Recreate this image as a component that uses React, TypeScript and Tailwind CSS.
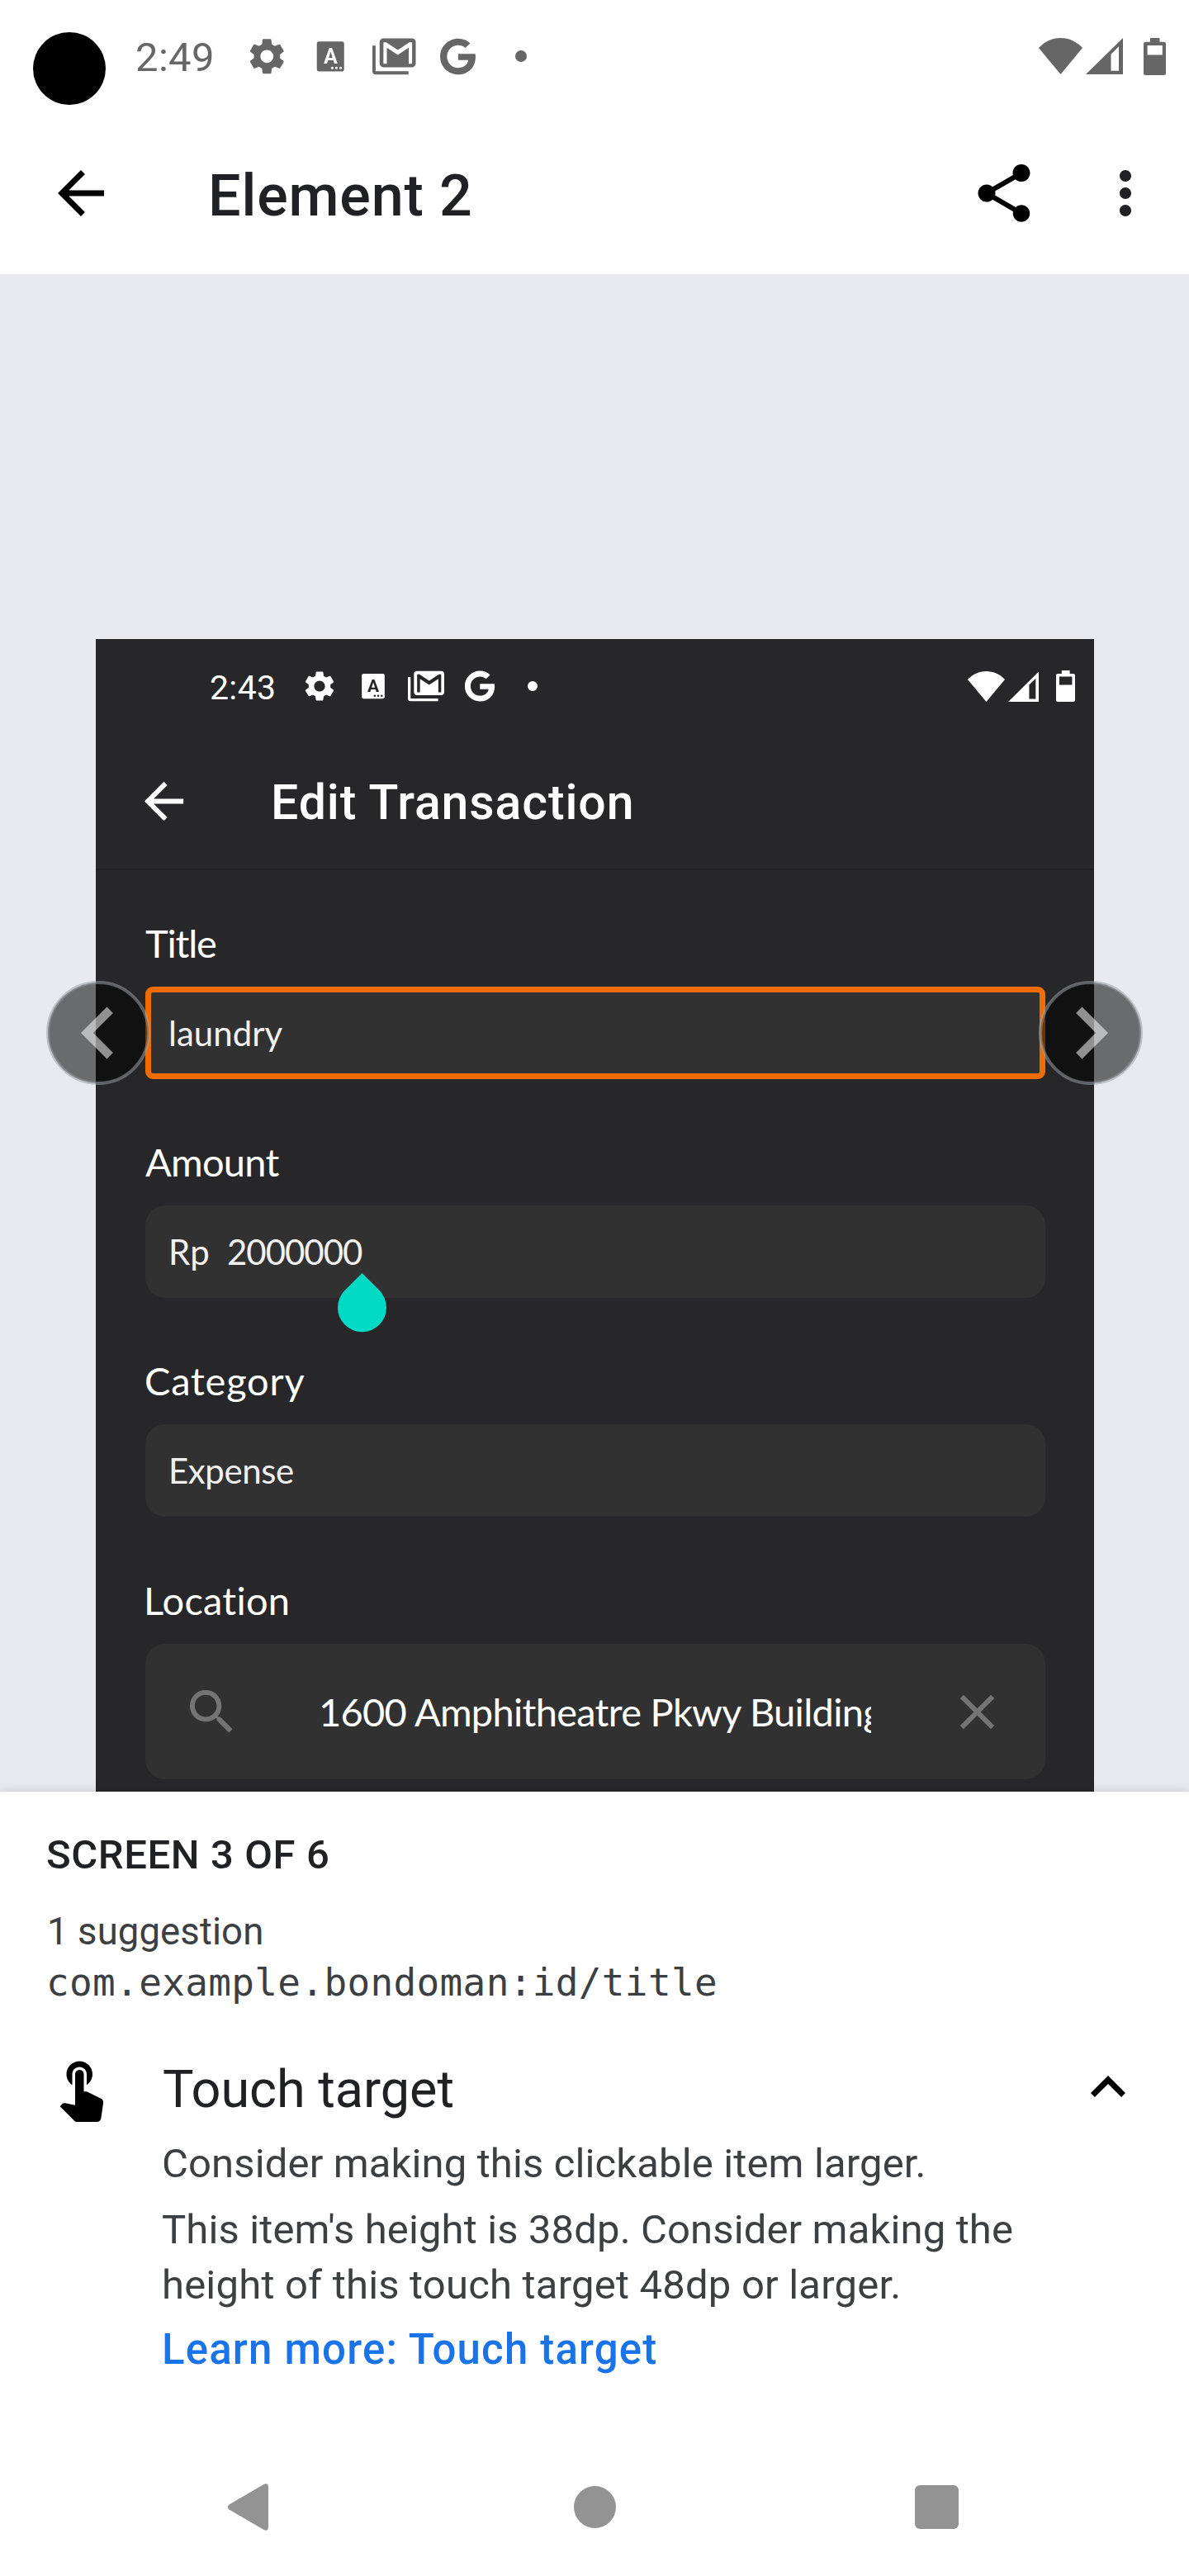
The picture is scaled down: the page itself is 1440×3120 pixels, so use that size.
import React from "react";
import {
  MdArrowBack,
  MdClose,
  MdExpandLess,
  MdMoreVert,
  MdSearch,
  MdSettings,
  MdShare,
} from "react-icons/md";
import { FaGoogle } from "react-icons/fa";

type IconProps = { className?: string };

function KeyboardIcon({ className }: IconProps) {
  return (
    <svg viewBox="0 0 24 24" className={className} fill="currentColor">
      <mask id="keyboard-cut">
        <rect width="24" height="24" fill="#fff" />
        <text
          x="12.05"
          y="16"
          textAnchor="middle"
          fontSize="11.5"
          fontWeight="700"
          fontFamily="Roboto, sans-serif"
          fill="#000"
        >
          A
        </text>
        <circle cx="13" cy="18.4" r="0.7" fill="#000" />
        <circle cx="15.3" cy="18.4" r="0.7" fill="#000" />
        <circle cx="17.6" cy="18.4" r="0.7" fill="#000" />
      </mask>
      <rect x="4.45" y="3.8" width="15.1" height="16.5" rx="1.1" mask="url(#keyboard-cut)" />
    </svg>
  );
}

function MailStackIcon({ className }: IconProps) {
  return (
    <svg viewBox="0 0 24 24" className={className} fill="currentColor">
      <path d="M0 6h1.8v14.2H20V22H1.800A1.800 1.800 0 0 1 0 20.200Z" />
      <path
        fillRule="evenodd"
        d="M6 2H22a2 2 0 0 1 2 2V16a2 2 0 0 1-2 2H6a2 2 0 0 1-2-2V4a2 2 0 0 1 2-2ZM6.100 16.100V4.200H7.600L14.050 8.400 20.500 4.200H22V16.100H20.100V7.200L14.050 11.200 8 7.200V16.100Z"
      />
    </svg>
  );
}

function WifiIcon({ className }: IconProps) {
  return (
    <svg viewBox="0 0 53 44" preserveAspectRatio="none" className={className} fill="currentColor">
      <path d="M26.500 44L0 12C7 4.500 16 0 26.500 0S46 4.500 53 12Z" />
    </svg>
  );
}

function SignalIcon({ className }: IconProps) {
  return (
    <svg viewBox="0 0 45 44" preserveAspectRatio="none" className={className} fill="currentColor">
      <path fillRule="evenodd" d="M0 44L45 0V44ZM30.500 19.700V39.700H40V10.300Z" />
    </svg>
  );
}

function BatteryIcon({ className }: IconProps) {
  return (
    <svg viewBox="0 0 27 45" preserveAspectRatio="none" className={className} fill="currentColor">
      <path
        fillRule="evenodd"
        d="M8 0H19.500V4.700H24.500A2.500 2.500 0 0 1 27 7.200V42.500A2.500 2.500 0 0 1 24.500 45H2.500A2.500 2.500 0 0 1 0 42.500V7.200A2.500 2.500 0 0 1 2.500 4.700H8ZM4.600 9V20.600H22.800V9Z"
      />
    </svg>
  );
}

function TouchIcon({ className }: IconProps) {
  return (
    <svg viewBox="0 0 24 24" className={className} fill="currentColor">
      <path d="M9 11.240V7.500C9 6.120 10.120 5 11.500 5S14 6.120 14 7.500v3.740c1.210-.81 2-2.180 2-3.740C16 5.010 13.990 3 11.500 3S7 5.010 7 7.500c0 1.560.79 2.930 2 3.740zm9.840 4.630l-4.540-2.260c-.17-.07-.35-.11-.54-.11H13v-6c0-.83-.67-1.500-1.500-1.500S10 6.670 10 7.500v10.740l-3.430-.72c-.08-.01-.15-.03-.24-.03-.31 0-.59.13-.79.33l-.79.8 4.940 4.940c.27.27.65.44 1.060.44h6.790c.75 0 1.330-.55 1.440-1.280l.75-5.270c.01-.07.02-.14.02-.2 0-.62-.38-1.160-.91-1.380z" />
    </svg>
  );
}

function PagerButton({ direction, className }: { direction: "left" | "right"; className: string }) {
  return (
    <button aria-label={direction === "left" ? "Previous" : "Next"} className={className}>
      <svg viewBox="0 0 126 126" className="size-[126px]">
        <circle cx="63" cy="63" r="61" fill="#000" fillOpacity="0.54" />
        <circle
          cx="63"
          cy="63"
          r="61"
          fill="none"
          stroke="#9aa0a6"
          strokeOpacity="0.54"
          strokeWidth="4"
        />
        <path
          transform="scale(5.25)"
          fill="#fff"
          fillOpacity="0.54"
          d={
            direction === "left"
              ? "M15.410 7.410L14 6l-6 6 6 6 1.410-1.410L10.830 12z"
              : "M8.590 16.590L10 18l6-6-6-6-1.410 1.410L13.170 12z"
          }
        />
      </svg>
    </button>
  );
}

function PhoneStatusBar() {
  return (
    <div className="flex h-[136px] items-center pr-7 text-[#666666]">
      <div className="mt-[30px] ml-10 size-[88px] rounded-full bg-black" />
      <span className="ml-9 w-[133px] pt-1 text-[49px] leading-[60px] tracking-[0.35px]">2:49</span>
      <div className="flex items-center gap-[24.5px]">
        <MdSettings className="size-[52.5px]" />
        <KeyboardIcon className="size-[52.5px]" />
        <MailStackIcon className="size-[52.5px]" />
        <div className="flex w-[52.5px] justify-center">
          <FaGoogle className="size-[45px]" />
        </div>
        <div className="flex w-[52.5px] justify-center">
          <div className="size-3.5 rounded-full bg-current" />
        </div>
      </div>
      <div className="ml-auto flex items-center">
        <WifiIcon className="h-11 w-[53px]" />
        <SignalIcon className="ml-[4.5px] h-11 w-[45px]" />
        <BatteryIcon className="ml-[25px] h-[45px] w-[27px]" />
      </div>
    </div>
  );
}

function AppBar() {
  return (
    <header className="flex h-[196px] items-center pr-[35px] pl-14">
      <MdArrowBack className="size-[84px] text-black" />
      <h1 className="ml-28 pt-[6px] text-[70px] leading-[84px] font-medium tracking-[0.87px] text-[#202124]">
        Element 2
      </h1>
      <MdShare className="ml-auto size-[84px] text-black" />
      <MdMoreVert className="ml-[63px] size-[84px] text-[#202124]" />
    </header>
  );
}

function PreviewHeader() {
  return (
    <>
      <div className="flex h-[114px] items-center pr-[23px] text-white">
        <span className="ml-[138px] w-[111px] pt-1 text-[41px] leading-[50px] tracking-[0.33px]">
          2:43
        </span>
        <div className="flex items-center gap-[20.6px]">
          <MdSettings className="size-11" />
          <KeyboardIcon className="size-11" />
          <MailStackIcon className="size-11" />
          <div className="flex w-11 justify-center">
            <FaGoogle className="size-[38px]" />
          </div>
          <div className="flex w-11 justify-center">
            <div className="size-3 rounded-full bg-current" />
          </div>
        </div>
        <div className="ml-auto flex items-center">
          <WifiIcon className="h-[37px] w-[45px]" />
          <SignalIcon className="ml-[3.5px] h-[37px] w-[37.5px]" />
          <BatteryIcon className="ml-[21px] h-[38px] w-[23px]" />
        </div>
      </div>
      <div className="flex h-[166px] items-center border-b-2 border-[#212123] pl-[47px] text-white">
        <MdArrowBack className="size-[71px]" />
        <h2 className="ml-[94px] pt-1 text-[59px] leading-[72px] font-medium tracking-[0.88px]">
          Edit Transaction
        </h2>
      </div>
    </>
  );
}

function PreviewForm() {
  return (
    <div className="flex flex-col gap-[68px] pt-14 pr-[59px] pl-[60px] font-[Lato,sans-serif] text-[42px] text-[#f1f1f1]">
      <div className="flex flex-col gap-[21px]">
        <label className="text-[47px] leading-[64px] tracking-[-1.2px] text-white">Title</label>
        <div className="flex h-28 items-center rounded-[9px] border-[7px] border-[#ef6c00] bg-[#313131] pl-[21px] leading-[56px]">
          laundry
        </div>
      </div>
      <div className="flex flex-col gap-[21px]">
        <label className="text-[47px] leading-[64px] tracking-[-0.75px] text-white">Amount</label>
        <div className="relative flex h-28 items-center rounded-3xl bg-[#313131] pl-7 leading-[56px]">
          <span className="w-[71px] tracking-[0.2px]">Rp</span>
          <span className="tracking-[-1.03px]">2000000</span>
          <svg viewBox="0 0 60 72" className="absolute top-[82px] left-[233px] h-[72px] w-[60px]">
            <path
              fill="#03dac5"
              d="M29.500 0L50.360 20.860A29.500 29.500 0 1 1 8.640 20.860Z"
            />
          </svg>
        </div>
      </div>
      <div className="flex flex-col gap-[21px]">
        <label className="-ml-px text-[47px] leading-[64px] tracking-[0.8px] text-white">
          Category
        </label>
        <div className="flex h-28 items-center rounded-3xl bg-[#313131] pl-7 leading-[56px] tracking-[-0.42px]">
          Expense
        </div>
      </div>
      <div className="mt-px flex flex-col gap-[21px]">
        <label className="-ml-0.5 text-[47px] leading-[64px] tracking-[0.2px] text-white">
          Location
        </label>
        <div className="flex h-[164px] items-center rounded-3xl bg-[#313131] pl-[45px] text-[#747474]">
          <MdSearch className="size-[71px]" />
          <div className="ml-[94px] w-[669px] overflow-hidden text-[47px] leading-[64px] tracking-[-0.72px] whitespace-nowrap text-white">
            1600 Amphitheatre Pkwy Building
          </div>
          <MdClose className="ml-[93px] size-[71px]" />
        </div>
      </div>
    </div>
  );
}

function DetailSheet() {
  return (
    <section className="relative flex h-[782px] flex-col bg-white pt-[47px] pl-[57px] shadow-[0_0_12px_rgba(0,0,0,0.16)]">
      <div className="-ml-px text-[49px] leading-[60px] font-medium tracking-[0.6px] text-[#202124]">
        SCREEN 3 OF 6
      </div>
      <div className="mt-8 pt-px text-[45.5px] leading-[60px] tracking-[0.1px] text-[#3c4043]">
        1 suggestion
      </div>
      <div className="mt-px -ml-px font-['DejaVu_Sans_Mono',monospace] text-[46px] leading-[60px] tracking-[0.34px] text-[#3c4043]">
        com.example.bondoman:id/title
      </div>
      <div className="mt-[55px] -ml-px flex h-[84px] items-center pr-14">
        <TouchIcon className="size-[84px] text-black" />
        <h3 className="ml-[57px] pt-[6px] text-[63px] leading-[76px] tracking-[-0.05px] text-[#202124]">
          Touch target
        </h3>
        <MdExpandLess className="ml-auto size-[84px] text-black" />
      </div>
      <div className="mt-[17px] ml-[139px] text-[49px] leading-[67px] tracking-[0.13px] text-[#3c4043]">
        <p>Consider making this clickable item larger.</p>
        <p className="mt-[13px]">
          This item's height is 38dp. Consider making the
          <br />
          <span className="tracking-[0.2px]">height of this touch target 48dp or larger.</span>
        </p>
        <p className="mt-[11px] text-[51px] font-medium tracking-[1.17px] text-[#1a73e8]">
          Learn more: Touch target
        </p>
      </div>
    </section>
  );
}

function NavigationBar() {
  return (
    <nav className="relative flex h-[168px] items-center bg-white pl-[276px] text-[#939393]">
      <svg viewBox="0 0 49 57" className="h-[57px] w-[49px]" fill="currentColor">
        <path d="M1.500 25.500L43.500 1C46.500-.500 49 .500 49 4V53C49 56.500 46.500 57.500 43.500 56L1.500 31.500C-.500 30-.500 27 1.500 25.500Z" />
      </svg>
      <div className="ml-[369.5px] size-[51px] rounded-full bg-current" />
      <div className="ml-[362.5px] size-[53px] rounded-[6px] bg-current" />
    </nav>
  );
}

export default function App() {
  return (
    <div className="flex h-[3120px] w-[1440px] flex-col overflow-hidden bg-white font-[Roboto,sans-serif]">
      <PhoneStatusBar />
      <AppBar />
      <main className="relative flex h-[1838px] flex-col overflow-hidden bg-[#e8eaed] pt-[442px] pr-[115px] pl-[116px]">
        <div className="flex-1 bg-[#272729]">
          <PreviewHeader />
          <PreviewForm />
        </div>
        <PagerButton direction="left" className="absolute top-[856px] left-[55.5px]" />
        <PagerButton direction="right" className="absolute top-[856px] left-[1258px]" />
      </main>
      <DetailSheet />
      <NavigationBar />
    </div>
  );
}
